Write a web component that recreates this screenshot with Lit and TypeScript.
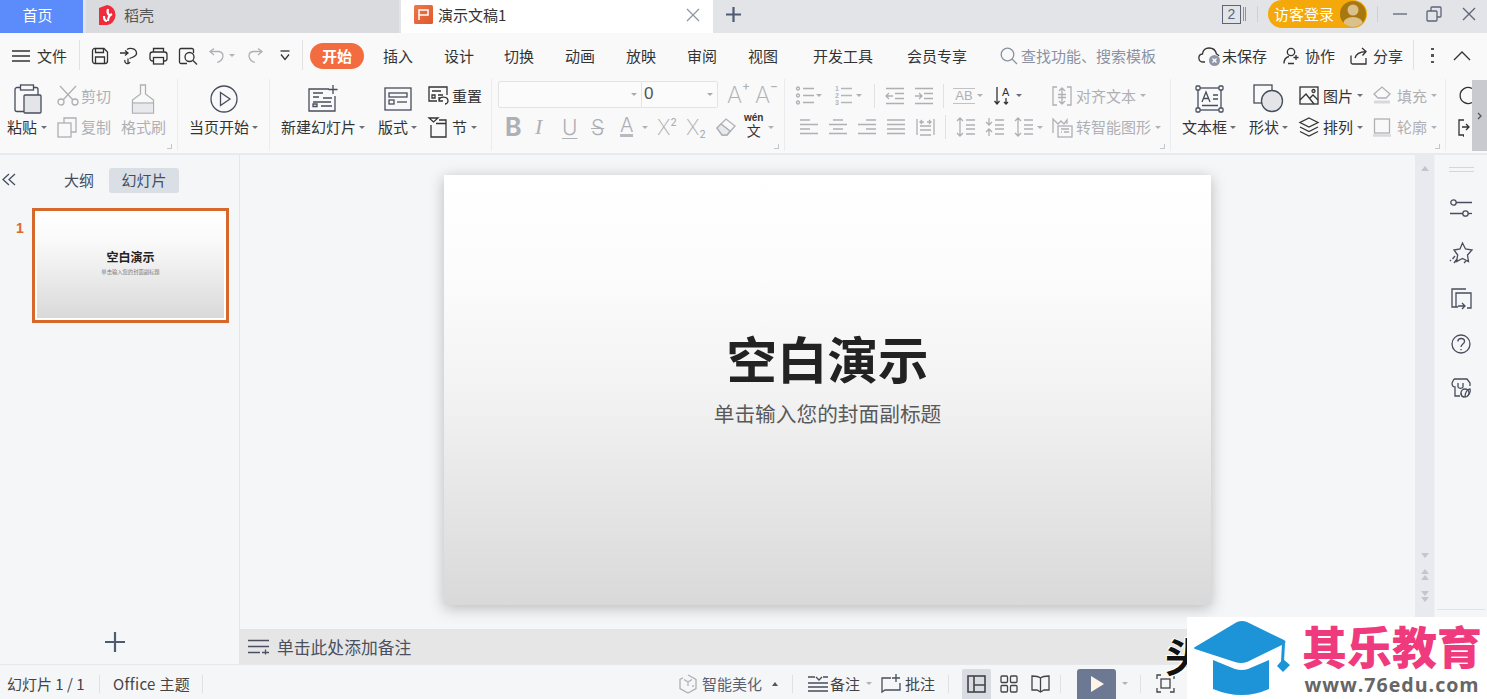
import { LitElement, html, css, svg, TemplateResult } from "lit";
import { customElement } from "lit/decorators.js";

type Cell = [number, TemplateResult | string];

const ic = (w: number, h: number, body: unknown, cls = "") =>
  html`<svg class="ic ${cls}" width=${w} height=${h} viewBox="0 0 ${w} ${h}">${body}</svg>`;

const row = (start: number, end: number, cells: Cell[], cls = "") => {
  const first = cells.length ? cells[0][0] : end;
  return html`<div class="row ${cls}">
    ${first > start ? html`<div class="c" style="width:${first - start}px"></div>` : ""}
    ${cells.map(([x, t], i) => {
      const next = i + 1 < cells.length ? cells[i + 1][0] : end;
      return html`<div class="c" style="width:${next - x}px">${t}</div>`;
    })}
  </div>`;
};

const caret = html`<i class="caret"></i>`;
const big = (t: TemplateResult) => html`<span class="big">${t}</span>`;
const dim = (t: TemplateResult | string) => html`<span class="dim">${t}</span>`;
const vbar = html`<i class="vbar"></i>`;

const Icons = {
  burger: ic(18, 14, svg`<path d="M0 2h18M0 7h18M0 12h18"/>`),
  save: ic(18, 18, svg`<path d="M3 1.5h10l3.5 3.5v9a2.5 2.5 0 0 1-2.5 2.5H4A2.5 2.5 0 0 1 1.500 14V4A2.500 2.500 0 0 1 3 1.500z"/><path d="M4.500 2v3.500h8V2M4.500 16.500V10h9v6.500" />`),
  saveas: ic(18, 18, svg`<path d="M0 6h7M5 3.500 8 6 5 8.500"/><path d="M7 2.500c2-1.500 9-2 9.500 3.500.4 4-5.500 4.500-7 5.500M8 11.500v5.500M5 13a2.500 2.500 0 1 0 5 2"/>`),
  print: ic(19, 18, svg`<path d="M4.500 5V1.500h10V5"/><rect x="1" y="5" width="17" height="9" rx="2.500"/><rect x="4.500" y="10.500" width="10" height="6.500" fill="#f8f8f9"/>`),
  preview: ic(20, 18, svg`<path d="M9 16.500H3A1.500 1.500 0 0 1 1.500 15V3A1.500 1.500 0 0 1 3 1.500h11A1.500 1.500 0 0 1 15.500 3v3"/><circle cx="11.500" cy="10" r="4.500"/><path d="m15 13.500 4 4"/>`),
  undo: ic(16, 18, svg`<path d="M5 8 1 4.500 5 1.500"/><path d="M1.500 4.500H10c6 1 5 9-2 11"/>`),
  redo: ic(16, 18, svg`<path d="M11 8l4-3.500-4-3"/><path d="M14.500 4.500H6c-6 1-5 9 2 11"/>`),
  more: ic(10, 11, svg`<path d="M0.500 1h9"/><path d="M1 4.500 5 9.500 9 4.500"/>`),
  search: ic(18, 18, svg`<circle cx="7.500" cy="7.500" r="6.300"/><path d="m12 12 5 5"/>`),
  cloud: ic(23, 22, svg`<path d="M7 17H5.500C-.5 17-.5 9.500 4.500 9c1-8 12-8 14 0 1 .3 2 1.200 2.500 2"/><circle cx="16.500" cy="15.500" r="5.500" fill="#8e97a8" stroke="none"/><path d="m14.500 13.500 4 4m0-4-4 4" stroke="#fff"/>`),
  collab: ic(18, 18, svg`<circle cx="8" cy="5" r="3.700"/><path d="M1 16.500c0-3 1-6 5-7M5 16.500h6M13 8v5M10.500 10.500h5" />`),
  share: ic(18, 18, svg`<path d="M1 8.500v7a1.500 1.500 0 0 0 1.500 1.500H16V11"/><path d="M5 11c1-4 4-6 11-6.500M12 1l4 3.500-3.500 4"/>`),
  dots: html`<span class="dots"><i></i><i></i><i></i></span>`,
  up: ic(18, 10, svg`<path d="m1 9 8-8 8 8"/>`),
  paste: ic(28, 30, svg`<path d="M6.500 3.500H3a2 2 0 0 0-2 2v20a2 2 0 0 0 2 2h7"/><path d="M20 3.500h2a2 2 0 0 1 2 2V11"/><rect x="6.500" y="1" width="13" height="5"/><rect x="10" y="11" width="17" height="18" rx="1" fill="#e3e5e8"/>`),
  cut: ic(22, 21, svg`<circle cx="4" cy="17" r="3"/><circle cx="18" cy="17" r="3"/><path d="M6 15 19 1M16 15 3 1"/>`),
  copy: ic(20, 21, svg`<path d="M7 6V1h12v14h-5"/><rect x="1" y="6" width="13" height="14"/>`),
  brush: ic(24, 30, svg`<path d="M9.500 1h5v9l8 6v13H1.500V16l8-6z"/><path d="M2 20h20v8.500H2z" fill="#e8e9ec" stroke="none"/><path d="M1.500 19h21" />`),
  play: ic(28, 28, svg`<circle cx="14" cy="14" r="13"/><path d="M10.500 7.500 20 14l-9.500 6.500z"/>`),
  newSlide: ic(30, 27, svg`<path d="M21 4H1v22h26V11"/><path d="M5 8h10M5 12h6M15 13h9M5 17h18M5 21.500h4v-2.500H5zM13 21h11"/><path d="M25 0v9M20.500 4.500h9"/>`),
  layout: ic(28, 24, svg`<rect x="1" y="1" width="26" height="22"/><rect x="5" y="6" width="18" height="4"/><rect x="5" y="13" width="5" height="4"/><path d="M13 15h10"/>`),
  reset: ic(21, 19, svg`<path d="M9 15H1V1h18v8"/><path d="M4 5h9M4 9h3v3H4zM13 5v0M10 9h5"/><path d="M11 14c1-4 9-4 9 1 0 2-2 3-3 3M11 11v4h4" />`),
  section: ic(21, 21, svg`<path d="m1 1h9l-4.500 4z"/><path d="M3 8v12h15V3h-7M8 6.500h10"/>`),
  bullets: ic(18, 19, svg`<circle cx="2" cy="2.500" r="1.500"/><circle cx="2" cy="9.500" r="1.500"/><circle cx="2" cy="16.500" r="1.500"/><path d="M7 2.500h11M7 9.500h11M7 16.500h11"/>`),
  numbers: html`<span class="numlist"><span>1<br />2<br />3</span>${ic(11, 19, svg`<path d="M0 2.500h11M0 9.500h11M0 16.500h11"/>`)}</span>`,
  outdent: ic(20, 18, svg`<path d="M1 1.500h18M10 6.500h9M10 11.500h9M1 16.500h18M8 9H1M4 6 1 9l3 3"/>`),
  indent: ic(20, 18, svg`<path d="M1 1.500h18M10 6.500h9M10 11.500h9M1 16.500h18M1 9h7M5 6l3 3-3 3"/>`),
  sort: html`<span class="sort">${ic(18, 20, svg`<path d="M3 1v17M0.500 15 3 18l2.500-3M12 12v6M10 16l2 2 2-2"/>`)}<b>A</b></span>`,
  alignText: ic(20, 20, svg`<path d="M5 1H1v18h4M15 1h4v18h-4M10 2v16M7 5l3-3 3 3M7 15l3 3 3-3M6 8.500h8M6 11.500h8"/>`),
  smart: ic(21, 21, svg`<path d="M1 16V2l5 5 3-3 3 3 3-4v4"/><rect x="6" y="9" width="14" height="11" /><path d="M9 12h8M9 15h1M12 15h5" />`),
  alL: ic(18, 16, svg`<path d="M0 1h10M0 5.500h18M0 10h10M0 14.500h18"/>`),
  alC: ic(18, 16, svg`<path d="M4 1h10M0 5.500h18M4 10h10M0 14.500h18"/>`),
  alR: ic(18, 16, svg`<path d="M8 1h10M0 5.500h18M8 10h10M0 14.500h18"/>`),
  alJ: ic(18, 16, svg`<path d="M0 1h18M0 5.500h18M0 10h18M0 14.500h18"/>`),
  alD: ic(19, 18, svg`<path d="M1 1v16M18 1v16M4 17h11M4 12h11M4 8h11M4 4h4M11 4h4M6 2 4 4l2 2M13 2l2 2-2 2"/>`),
  spA: ic(19, 20, svg`<path d="M4 1v18M1 4l3-3 3 3M1 16l3 3 3-3M10 3h9M10 8h9M10 12h9M10 17h9"/>`),
  spB: ic(19, 20, svg`<path d="M4 1v7M4 12v7M1 5l3 3 3-3M1 15l3-3 3 3M10 3h9M10 8h9M10 12h9M10 17h9"/>`),
  textbox: ic(29, 28, svg`<rect x="3" y="3" width="23" height="22"/><g fill="#f8f8f9"><rect x="1" y="1" width="4" height="4" rx="1"/><rect x="24" y="1" width="4" height="4" rx="1"/><rect x="1" y="23" width="4" height="4" rx="1"/><rect x="24" y="23" width="4" height="4" rx="1"/></g><path d="m7 17 4-10 4 10M8.500 13.500h5M18 10h5M18 14h5M7 20.500h16"/>`),
  shape: ic(31, 29, svg`<rect x="1" y="1" width="18" height="18"/><circle cx="19" cy="17" r="10.500" fill="#e3e5e8"/>`),
  pic: ic(20, 19, svg`<rect x="1" y="1" width="18" height="17"/><path d="m1 14 6-6 8 10M11 12l3-3 5 5"/><circle cx="14.500" cy="5" r="1.500"/>`),
  arrange: ic(20, 20, svg`<path d="m10 1 9 4.500-9 4.500-9-4.500zM1 10l9 4.500 9-4.500M1 14.500 10 19l9-4.500"/>`),
  fill: ic(18, 19, svg`<path d="m1 8 8-7 8 7-4 4H5z"/><path d="M1 16h16" stroke-width="3" stroke="#d8d9dc"/>`),
  outline: ic(18, 19, svg`<rect x="1.500" y="1" width="15" height="14"/><path d="M0 17.500h18" stroke-width="2.500" stroke="#d8d9dc"/>`),
  shape2: ic(16, 19, svg`<path d="M16 2.500a8 8 0 1 0 0 14"/>`),
  conv: ic(16, 21, svg`<path d="M6 3H1v15h5M4 10h7M8 7l3 3-3 3M6 19h-1"/>`),
  collapse: ic(14, 13, svg`<path d="M7 1 1 6.500 7 12M13 1 7 6.500 13 12"/>`),
  plus: ic(20, 20, svg`<path d="M10 0v20M0 10h20" stroke-width="2.200"/>`),
  notes: ic(21, 16, svg`<path d="M0 1.500h21M0 7.500h21M0 13.500h12M14 13.500h7M17.500 10.500v5"/>`),
  sliders: ic(22, 18, svg`<circle cx="3.500" cy="3.500" r="2.700"/><path d="M6 3.500h16M0 14.500h13"/><circle cx="15.500" cy="14.500" r="2.700"/><path d="M18 14.500h4"/>`),
  star: ic(22, 22, svg`<path d="m12.500 1 3 6 6.500 1-4.500 5 1 6.500-6-3-6 3 1.200-6.500L4 8l6-1z"/><path d="m5 14-2.500 3M7 17l-3 4M16 19l-2 2M1 18l-1 1"/>`),
  slideshow: ic(21, 21, svg`<path d="M15 1H1v18h6"/><path d="M5 19V5h15v15h-4"/><path d="M7 18h6M11 15l3 3-3 3"/>`),
  help: ic(20, 20, svg`<circle cx="10" cy="10" r="9"/><path d="M6.800 7.500C7 3.500 13.500 3.500 13.500 7.500c0 2.500-3.500 2.500-3.500 5.500M10 15v1.200"/>`),
  store: ic(21, 20, svg`<path d="M3 1h13l3 4v3M1 5l2-4M1 5c0 3 1 4 3 4v9h5M7 5v4a3 3 0 0 0 5 0V5"/><circle cx="14" cy="15" r="4"/><path d="M14 19c0-4 2-8 5-8 1 3-1 6-3 7M13 19c-2 0-3-2-3-4"/>`),
  beauty: ic(18, 20, svg`<path d="m9 1 8 4.500v9L9 19l-8-4.500v-9l3-1.700"/><path d="M5 5.500 9 8l4-2.500M9 8v4M14 11v2"/>`),
  note2: ic(20, 16, svg`<path d="M0 7h20M0 11h20M0 15h20M0 1h7M8 1l3 3 3-3M15 1h5"/>`),
  comment: ic(20, 20, svg`<path d="M10 4H1v14l3-2h15V9M15 0v8M11 4h8"/>`),
  viewN: ic(19, 18, svg`<rect x="1" y="1" width="17" height="16"/><path d="M7 1v16M7 10h11"/>`, "thick"),
  viewG: ic(18, 18, svg`<rect x="1" y="1" width="6.500" height="6.500" rx="1"/><rect x="10.500" y="1" width="6.500" height="6.500" rx="1"/><rect x="1" y="10.500" width="6.500" height="6.500" rx="1"/><rect x="10.500" y="10.500" width="6.500" height="6.500" rx="1"/>`),
  viewB: ic(19, 18, svg`<path d="M9.500 3C7 1 4 1 1 1v14h5l3.500 2 3.500-2h5V1c-3 0-6 0-8.500 2zM9.500 3v14"/>`),
  fit: ic(19, 19, svg`<path d="M1 5V1h4M14 1h4v4M18 14v4h-4M5 18H1v-4"/><rect x="5" y="5" width="9" height="9"/>`),
  winMin: ic(14, 2, svg`<path d="M0 1h14"/>`),
  winMax: ic(16, 16, svg`<rect x="1" y="5" width="10" height="10" rx="1"/><path d="M5 5V2a1 1 0 0 1 1-1h8a1 1 0 0 1 1 1v8a1 1 0 0 1-1 1h-3"/>`),
  x: ic(14, 14, svg`<path d="m1 1 12 12M13 1 1 13"/>`),
  tabPlus: ic(15, 15, svg`<path d="M7.500 0v15M0 7.500h15" stroke-width="2.200"/>`),
};

@customElement("app-root")
export class AppRoot extends LitElement {
  static styles = css`
    :host {
      display: block;
      position: relative;
      width: 100%;
      height: 100vh;
      overflow: hidden;
      background: #f5f6f8;
      color: #333;
      font: 15px/1.2 "Noto Sans CJK SC", "Noto Sans", sans-serif;
    }
    .app { display: flex; flex-direction: column; height: 699px; }
    .ic { display: block; fill: none; stroke: currentColor; stroke-width: 1.3; flex: none; overflow: visible; }
    .ic.thick { stroke-width: 1.6; }
    .row { display: flex; align-items: center; }
    .c { display: flex; align-items: center; flex: none; height: 100%; white-space: nowrap; }
    .caret { display: block; width: 0; height: 0; border: 3px solid transparent; border-top: 3.500px solid #6b7078; border-bottom: 0; }
    .caret.upward { border-top: 0; border-bottom: 4px solid #555; }
    .dim { color: #aeb0b4; display: flex; align-items: center; }
    .dim .caret { border-top-color: #b0b2b6; }
    .big { display: block; margin-top: 6px; color: #474d5c; }
    .dim .big { color: inherit; }
    .vbar { display: block; width: 1px; height: 24px; background: #dfe1e5; }

    /* title bar */
    .tabs { display: flex; height: 33px; background: #e2e4e8; align-items: stretch; flex: none; }
    .tabs .row { height: 28px; }
    .home { width: 83px; background: #5c8cfb; color: #fff; display: flex; align-items: center; justify-content: center; padding: 0 8px 4px 0; box-sizing: border-box; }
    .shell { width: 313px; margin-left: 3px; background: #d9dbdf; display: flex; align-items: center; padding: 0 0 4px 13px; gap: 7px; box-sizing: border-box; color: #555; }
    .doc { width: 312px; margin-left: 2px; background: #fff; display: flex; align-items: center; padding: 0 13px 4px; gap: 5px; box-sizing: border-box; color: #333; }
    .doc .close { margin-left: auto; color: #8d95a6; }
    .addtab { color: #4f5a75; display: flex; align-items: center; margin-left: 13px; width: 496px; padding-bottom: 4px; box-sizing: border-box; }
    .pagecount { width: 25px; height: 20px; display: flex; align-items: center; color: #5c6478; }
    .pagecount b { font: 400 14px "Liberation Sans", sans-serif; border: 1.300px solid #5c6478; padding: 0 4px; height: 17px; width: 11px; line-height: 17px; text-align: center; }
    .pagecount i { width: 5px; height: 14px; margin-left: 2px; background: repeating-linear-gradient(90deg, #8c93a3 0 1px, transparent 1px 2px); }
    .tdiv { width: 1px; height: 16px; background: #cfd1d6; }
    .login { width: 99px; height: 28px; background: #f5a80a; border-radius: 14px; color: #fff; display: flex; align-items: center; justify-content: space-between; padding: 0 1px 0 6px; box-sizing: border-box; }
    .avatar { width: 26px; height: 26px; border-radius: 50%; background: #a87810; overflow: hidden; flex: none; }
    .win { color: #5c6478; }

    /* menu */
    .menu { height: 41px; background: #f9f9fa; flex: none; }
    .menu .row { height: 41px; padding-top: 4px; box-sizing: border-box; }
    .menu .vbar { height: 30px; margin-top: -2px; }
    .pill { width: 54px; height: 26px; border-radius: 13px; background: #f36c3f; color: #fff; font-weight: 700; display: flex; align-items: center; justify-content: center; }
    .hint { color: #8a92a2; }
    .hint2 { color: #8a92a2; }
    .dots { display: flex; flex-direction: column; gap: 4px; }
    .dots i { width: 2.500px; height: 2.500px; background: #555; display: block; }

    /* ribbon */
    .ribbon { background: #f9f9fa; display: flex; flex: none; padding-top: 5px; box-sizing: border-box; border-bottom: 2px solid #e9eaec; height: 81px; position: relative; color: #333; }
    .group { position: relative; height: 72px; flex: none; border-right: 1px solid #ebecee; box-sizing: border-box; }
    .group .row:nth-child(1) { height: 33px; }
    .group .row:nth-child(2) { height: 30px; }
    .launcher { position: absolute; right: 5px; bottom: 2px; width: 4px; height: 4px; border: solid #c4c6ca; border-width: 0 1.500px 1.500px 0; }
    .combo { width: 144px; height: 27px; box-sizing: border-box; border: 1px solid #e1e3e6; border-radius: 2px 0 0 2px; background: #fbfbfc; display: flex; align-items: center; justify-content: flex-end; padding: 0 4px; margin-top: -3px; }
    .combo .caret, .size .caret { border-top-color: #a8abb2; }
    .size { width: 76px; height: 27px; box-sizing: border-box; border: 1px solid #e1e3e6; border-left: 0; border-radius: 0 2px 2px 0; background: #fbfbfc; display: flex; align-items: center; justify-content: space-between; padding: 0 4px 0 2px; margin-top: -3px; font: 17px "Liberation Sans", sans-serif; color: #555; }
    .g { font-family: "Inter", "Liberation Sans", sans-serif; color: #aeb0b4; line-height: 1; position: relative; display: inline-block; }
    .gA { font-size: 23px; font-weight: 200; }
    .gA sup { position: absolute; left: 15px; top: -4px; font-size: 12px; font-weight: 500; line-height: 1; }
    .gB { font-size: 25px; font-weight: 700; }
    .gI { font: italic 22px "Liberation Serif", serif; }
    .gU { font-size: 21px; font-weight: 300; text-decoration: underline; text-underline-offset: 3px; text-decoration-thickness: 1px; }
    .gS { font-size: 21px; font-weight: 300; text-decoration: line-through; text-decoration-thickness: 1px; }
    .gT { font-size: 20px; font-weight: 300; border-bottom: 3px solid #b8babe; line-height: 17px; display: block; }
    .gX { font-size: 21px; font-weight: 200; }
    .gX small { font-size: 10px; font-weight: 500; position: relative; }
    .gX .up { top: -9px; }
    .gX .down { top: 3px; }
    .ab { font: 13px/14px "Liberation Sans", sans-serif; color: #aeb0b4; border-top: 1.500px solid #c0c2c6; border-bottom: 1.500px solid #c0c2c6; width: 22px; text-align: center; letter-spacing: 0; }
    .wen { display: flex; flex-direction: column; align-items: center; color: #333; margin-top: -6px; }
    .wen b { font: 700 10px/11px "Liberation Sans", sans-serif; }
    .wen span { font-size: 14px; line-height: 14px; height: 14px; }
    .numlist { display: flex; gap: 2px; align-items: center; color: #b4b6ba; }
    .numlist span { font: 700 7px/7px "Liberation Sans", sans-serif; }
    .sort { position: relative; display: block; width: 18px; height: 20px; color: #333; }
    .sort b { position: absolute; left: 8px; top: 0; font: 400 11px "Liberation Sans", sans-serif; }
    .scrollr { position: absolute; right: 0; top: 6px; width: 15px; height: 71px; background: #c8cad0; display: flex; align-items: center; justify-content: center; color: #4f5568; }

    /* main */
    .main { flex: 1; display: flex; min-height: 0; }
    .left { width: 240px; flex: none; box-sizing: border-box; border-right: 1px solid #e5e6e9; display: flex; flex-direction: column; }
    .ltabs { height: 25px; margin-top: 13px; color: #444d60; }
    .ltabs .row { height: 25px; }
    .nudge { padding-bottom: 2px; }
    .ltabs .on { width: 70px; height: 25px; background: #dadfe6; border-radius: 3px; display: flex; align-items: center; justify-content: center; box-sizing: border-box; padding-bottom: 2px; }
    .thumbrow { display: flex; margin-top: 15px; }
    .num { width: 32px; box-sizing: border-box; padding: 12px 0 0 16px; color: #d96a2c; font: 700 14px "Liberation Sans", sans-serif; }
    .thumb { width: 197px; height: 115px; box-sizing: border-box; border: 3px solid #d5682a; background: #fff; padding: 0 2px 2px; }
    .mini { height: 100%; background: linear-gradient(#fff 0%, #f9f9f9 30%, #d9d9d9 100%); display: flex; flex-direction: column; align-items: center; padding-top: 38px; box-sizing: border-box; }
    .mini b { font-size: 12px; line-height: 15px; color: #222; }
    .mini span { font-size: 5.300px; line-height: 8px; color: #777; margin-top: 4px; }
    .addslide { margin-top: auto; height: 32px; display: flex; justify-content: center; color: #4f5a75; padding-right: 10px; }
    .work { flex: 1; display: flex; flex-direction: column; min-width: 0; }
    .stage { flex: 1; display: flex; min-height: 0; }
    .canvas { flex: 1; display: flex; justify-content: center; padding-top: 20px; box-sizing: border-box; }
    .slide { width: 767px; height: 430px; background: linear-gradient(#fff 0%, #fcfcfc 22%, #f3f3f3 50%, #d9d9d9 100%); box-shadow: 0 3px 14px rgba(0, 0, 0, 0.25); display: flex; flex-direction: column; align-items: center; box-sizing: border-box; padding-top: 147px; }
    .slide h1 { margin: 0; font-size: 50.500px; line-height: 70px; font-weight: 700; color: #222; }
    .slide p { margin: 6px 0 0; font-size: 20.700px; line-height: 30px; color: #595959; }
    .scroll { width: 20px; flex: none; background: #e9eaef; border-right: 1px solid #f0f1f4; box-sizing: border-box; position: relative; display: flex; flex-direction: column; align-items: center; }
    .sb { width: 0; height: 0; border: 4px solid transparent; }
    .sb.u { border-bottom: 5px solid #c4c6cc; border-top: 0; }
    .sb.d { border-top: 5px solid #c4c6cc; border-bottom: 0; }
    .sgap1 { height: 11px; flex: none; }
    .sgap2 { height: 27px; flex: none; }
    .sgap { flex: 1; }
    .sbm { margin-top: 1px; }
    .right { width: 52px; flex: none; display: flex; flex-direction: column; align-items: center; color: #474d5c; }
    .handle { width: 25px; height: 3px; border-top: 1px solid #d4d6da; border-bottom: 1px solid #d4d6da; margin-top: 12px; margin-bottom: 27px; }
    .right .ic { margin-bottom: 24.500px; }
    .rline { margin-top: auto; margin-bottom: 19px; width: 48px; height: 1px; background: #e2e3e6; }
    .notes { height: 35px; box-sizing: border-box; flex: none; border-top: 1px solid #e3e5e8; background: #e6e6e6; display: flex; align-items: center; padding-left: 8px; gap: 8px; color: #4a5060; font-size: 16.800px; }

    /* status */
    .status { height: 35px; flex: none; border-top: 1px solid #e7e8eb; box-sizing: border-box; color: #444; background: #f5f6f8; }
    .status .row { height: 34px; padding-top: 3px; box-sizing: border-box; }
    .status .vbar { height: 18px; }
    .viewon { width: 29px; height: 30px; margin-top: 1px; background: #d9dde3; border-radius: 2px 2px 0 0; display: flex; align-items: center; justify-content: center; }
    .playbtn { width: 39px; height: 30px; margin-top: 1px; background: #6d7993; border-radius: 3px 3px 0 0; display: flex; align-items: center; justify-content: center; }
    .playbtn i { width: 0; height: 0; border: 8.500px solid transparent; border-left: 13px solid #fdf4e8; border-right: 0; margin-left: 2px; }
    .st { font-size: 15px; color: #5a6070; }
    .office { letter-spacing: 0.350px; }
    .gicon { color: #474d5c; }

    /* overlays */
    .stamp { position: absolute; left: 1165px; top: 632px; width: 22px; height: 49px; overflow: hidden; font-size: 40px; line-height: 46px; font-weight: 700; color: #111; text-shadow: 0 0 2px #fff, 1px 1px 0 #fff, -1px -1px 0 #fff; }
    .mark { position: absolute; left: 1187px; top: 617px; width: 300px; height: 82px; background: #fff; display: flex; }
    .mark svg { display: block; flex: none; }
    .marktext { margin-left: 9px; display: flex; flex-direction: column; align-items: center; width: 180px; }
    .cn { font-size: 45px; line-height: 46px; margin-top: 6px; font-weight: 900; color: #ef3b7d; white-space: nowrap; }
    .en { font: 700 19.600px/24px "Open Sans", "Liberation Sans", sans-serif; color: #666; letter-spacing: 1px; margin-top: 4px; white-space: nowrap; }
  `;

  private titlebar() {
    return html`<div class="tabs">
      <div class="home">首页</div>
      <div class="shell">
        <svg width="18" height="20" viewBox="0 0 18 20">
          <path d="M0 3 8 0a9 10 0 1 1-1 20H0z" fill="#ef2b3c" />
          <path d="M5 11c0 3 1 5 3 5M13 9c-2 1-4 3-4 7M9 4c-1 3 0 5 1 6" fill="none" stroke="#fff" stroke-width="2.200" />
        </svg>
        <span>稻壳</span>
      </div>
      <div class="doc">
        <svg width="19" height="19" viewBox="0 0 19 19">
          <defs><linearGradient id="pg" x1="0" y1="0" x2="1" y2="1"><stop offset="0" stop-color="#ec7a4c" /><stop offset="1" stop-color="#e0572f" /></linearGradient></defs>
          <rect width="19" height="19" rx="1.500" fill="url(#pg)" />
          <path d="M5 15V5h9v5H5" fill="none" stroke="#fff" stroke-width="1.500" />
        </svg>
        <span>演示文稿1</span>
        <span class="close">${Icons.x}</span>
      </div>
      <div class="addtab">${Icons.tabPlus}</div>
      ${row(1223, 1487, [
        [1223, html`<span class="pagecount"><b>2</b><i></i></span>`],
        [1258, html`<i class="tdiv"></i>`],
        [1269, html`<div class="login"><span>访客登录</span>
          <span class="avatar"><svg width="26" height="26" viewBox="0 0 26 26"><circle cx="13" cy="9" r="5.500" fill="#dcc08a" /><ellipse cx="13" cy="23" rx="10" ry="7" fill="#dcc08a" /></svg></span>
        </div>`],
        [1378, html`<i class="tdiv"></i>`],
        [1394, html`<span class="win">${Icons.winMin}</span>`],
        [1427, html`<span class="win">${Icons.winMax}</span>`],
        [1463, html`<span class="win">${Icons.x}</span>`],
      ])}
    </div>`;
  }

  private menu() {
    const tabs: [number, string][] = [
      [383, "插入"], [444, "设计"], [504, "切换"], [565, "动画"], [626, "放映"],
      [687, "审阅"], [748, "视图"], [813, "开发工具"], [907, "会员专享"],
    ];
    return html`<div class="menu">
      ${row(0, 1487, [
        [12, Icons.burger],
        [37, "文件"],
        [79, html`<i class="vbar"></i>`],
        [91, Icons.save],
        [120, Icons.saveas],
        [149, Icons.print],
        [178, Icons.preview],
        [209, dim(Icons.undo)],
        [229, dim(caret)],
        [247, dim(Icons.redo)],
        [280, Icons.more],
        [302, html`<i class="vbar"></i>`],
        [310, html`<div class="pill">开始</div>`],
        ...tabs.map(([x, t]) => [x, t] as Cell),
        [1000, html`<span class="hint2">${Icons.search}</span>`],
        [1021, html`<span class="hint">查找功能、搜索模板</span>`],
        [1198, Icons.cloud],
        [1222, "未保存"],
        [1283, Icons.collab],
        [1305, "协作"],
        [1350, Icons.share],
        [1373, "分享"],
        [1413, html`<i class="vbar"></i>`],
        [1431, Icons.dots],
        [1453, Icons.up],
      ])}
    </div>`;
  }

  private ribbon() {
    return html`<div class="ribbon">
      <div class="group" style="width:178px">
        ${row(0, 177, [[14, big(Icons.paste)], [57, dim(Icons.cut)], [81, dim("剪切")], [131, dim(big(Icons.brush))]])}
        ${row(0, 177, [[7, "粘贴"], [41, caret], [57, dim(Icons.copy)], [81, dim("复制")], [121, dim("格式刷")]])}
        <i class="launcher"></i>
      </div>
      <div class="group" style="width:92px">
        ${row(178, 269, [[210, big(Icons.play)]])}
        ${row(178, 269, [[189, "当页开始"], [252, caret]])}
      </div>
      <div class="group" style="width:222px">
        ${row(270, 491, [[308, big(Icons.newSlide)], [384, big(Icons.layout)], [428, Icons.reset], [452, "重置"]])}
        ${row(270, 491, [[281, "新建幻灯片"], [359, caret], [378, "版式"], [411, caret], [428, Icons.section], [452, "节"], [471, caret]])}
      </div>
      <div class="group" style="width:293px">
        ${row(492, 784, [
          [498, html`<div class="combo">${caret}</div>`],
          [642, html`<div class="size"><span>0</span>${caret}</div>`],
          [727, html`<span class="g gA">A<sup>+</sup></span>`],
          [755, html`<span class="g gA">A<sup>−</sup></span>`],
        ])}
        ${row(492, 784, [
          [505, html`<span class="g gB">B</span>`],
          [535, html`<span class="g gI">I</span>`],
          [562, html`<span class="g gU">U</span>`],
          [591, html`<span class="g gS">S</span>`],
          [620, html`<span class="g gT">A</span>`],
          [642, dim(caret)],
          [657, html`<span class="g gX">X<small class="up">2</small></span>`],
          [686, html`<span class="g gX">X<small class="down">2</small></span>`],
          [716, dim(ic(20, 18, svg`<path d="m1 10 9-9 9 7-8 9H6zM5 6l9 7"/><path d="M5 6l9 7-3 4H6l-5-7z" fill="#e8e9ec"/>`))],
          [744, html`<span class="wen"><b>wén</b><span>文</span></span>`],
          [768, dim(caret)],
        ])}
        <i class="launcher"></i>
      </div>
      <div class="group" style="width:386px">
        ${row(785, 1170, [
          [796, dim(Icons.bullets)], [816, dim(caret)],
          [835, Icons.numbers], [856, dim(caret)],
          [874, vbar],
          [885, dim(Icons.outdent)], [914, dim(Icons.indent)],
          [943, vbar],
          [953, html`<span class="ab">AB</span>`], [977, dim(caret)],
          [994, Icons.sort], [1016, caret],
          [1052, dim(Icons.alignText)], [1076, dim("对齐文本")], [1140, dim(caret)],
        ])}
        ${row(785, 1170, [
          [800, dim(Icons.alL)], [829, dim(Icons.alC)], [858, dim(Icons.alR)], [887, dim(Icons.alJ)], [916, dim(Icons.alD)],
          [945, vbar],
          [956, dim(Icons.spA)], [985, dim(Icons.spB)], [1014, dim(Icons.spA)], [1037, dim(caret)],
          [1052, dim(Icons.smart)], [1076, dim("转智能图形")], [1155, dim(caret)],
        ])}
        <i class="launcher"></i>
      </div>
      <div class="group" style="width:275px">
        ${row(1171, 1445, [
          [1195, big(Icons.textbox)],
          [1253, big(Icons.shape)],
          [1299, Icons.pic], [1323, "图片"], [1357, caret],
          [1373, dim(Icons.fill)], [1397, dim("填充")], [1431, dim(caret)],
        ])}
        ${row(1171, 1445, [
          [1182, "文本框"], [1230, caret], [1249, "形状"], [1282, caret],
          [1299, Icons.arrange], [1323, "排列"], [1357, caret],
          [1373, dim(Icons.outline)], [1397, dim("轮廓")], [1431, dim(caret)],
        ])}
        <i class="launcher"></i>
      </div>
      <div class="group" style="width:27px;border:0">
        ${row(1446, 1472, [[1456, Icons.shape2]])}
        ${row(1446, 1472, [[1458, Icons.conv]])}
      </div>
      <div class="scrollr">${ic(5, 8, svg`<path d="m1 1 3 3-3 3"/>`)}</div>
    </div>`;
  }

  private leftPanel() {
    return html`<div class="left">
      <div class="ltabs">
        ${row(0, 239, [
          [2, html`<span class="nudge">${Icons.collapse}</span>`],
          [64, html`<span class="nudge">大纲</span>`],
          [109, html`<div class="on">幻灯片</div>`],
        ])}
      </div>
      <div class="thumbrow">
        <div class="num">1</div>
        <div class="thumb"><div class="mini"><b>空白演示</b><span>单击输入您的封面副标题</span></div></div>
      </div>
      <div class="addslide">${Icons.plus}</div>
    </div>`;
  }

  private work() {
    return html`<div class="work">
      <div class="stage">
        <div class="canvas">
          <div class="slide"><h1>空白演示</h1><p>单击输入您的封面副标题</p></div>
        </div>
        <div class="scroll">
          <div class="sgap1"></div><i class="sb u"></i>
          <div class="sgap"></div>
          <i class="sb d"></i><div class="sgap1"></div>
          <i class="sb u"></i><i class="sb u sbm"></i><div class="sgap1"></div>
          <i class="sb d"></i><i class="sb d sbm"></i><div class="sgap2"></div>
        </div>
        <div class="right">
          <div class="handle"></div>
          ${Icons.sliders}${Icons.star}${Icons.slideshow}${Icons.help}${Icons.store}
          <div class="rline"></div>
        </div>
      </div>
      <div class="notes">${Icons.notes}<span>单击此处添加备注</span></div>
    </div>`;
  }

  private status() {
    return html`<div class="status">
      ${row(0, 1187, [
        [7, "幻灯片 1 / 1"],
        [99, html`<i class="vbar"></i>`],
        [113, html`<span class="office">Office 主题</span>`],
        [202, html`<i class="vbar"></i>`],
        [679, html`<span class="dim">${Icons.beauty}</span>`],
        [702, html`<span class="st">智能美化</span>`],
        [772, html`<i class="caret upward"></i>`],
        [792, html`<i class="vbar"></i>`],
        [808, html`<span class="gicon">${Icons.note2}</span>`],
        [830, "备注"],
        [866, dim(caret)],
        [881, html`<span class="gicon">${Icons.comment}</span>`],
        [905, "批注"],
        [948, html`<i class="vbar"></i>`],
        [962, html`<div class="viewon">${Icons.viewN}</div>`],
        [1000, Icons.viewG],
        [1031, Icons.viewB],
        [1060, html`<i class="vbar"></i>`],
        [1077, html`<div class="playbtn"><i></i></div>`],
        [1122, dim(caret)],
        [1140, html`<i class="vbar"></i>`],
        [1156, Icons.fit],
      ])}
    </div>`;
  }

  render() {
    return html`<div class="app">
        ${this.titlebar()} ${this.menu()} ${this.ribbon()}
        <div class="main">${this.leftPanel()}${this.work()}</div>
        ${this.status()}
      </div>
      <div class="stamp">头</div>
      <div class="mark">
        <svg width="106" height="82" viewBox="0 0 106 82">
          <path d="M8 30 50 5q5-2 10 0l37 18q3 2 0 4L60 45q-6 2-12 0L8 32q-2-1 0-2z" fill="#1e94d8" />
          <path d="M26 43 48 52q7 2 13 0l21-9v29q-27 12-56 0z" fill="#1e94d8" />
          <path d="M95 27l-1 18 3 0 1-19z" fill="#1e94d8" />
          <path d="M96 42l7 6-7 7-6-6z" fill="#1e94d8" />
        </svg>
        <div class="marktext"><div class="cn">其乐教育</div><div class="en">www.76edu.com</div></div>
      </div>`;
  }
}
